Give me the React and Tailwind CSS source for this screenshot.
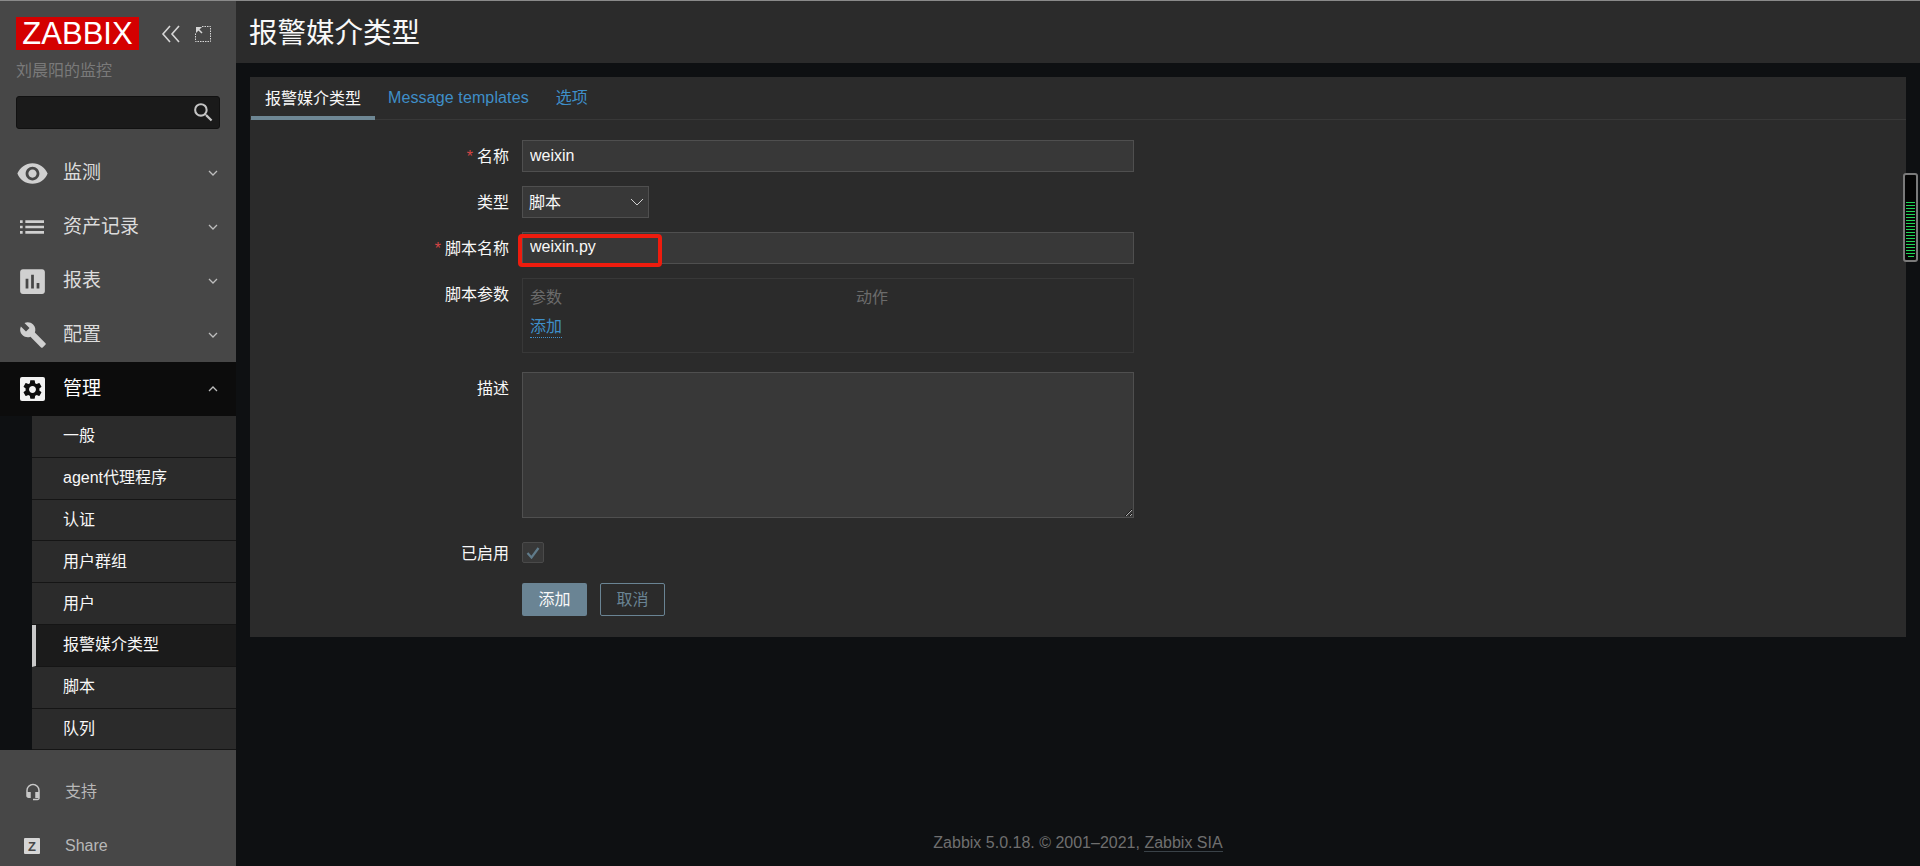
import React from 'react'
import {
  MdRemoveRedEye,
  MdList,
  MdAssessment,
  MdBuild,
  MdSettings,
  MdSearch,
  MdHeadsetMic,
} from 'react-icons/md'

const Chevron = ({ up, className }) => (
  <svg width="10" height="6" viewBox="0 0 10 6" fill="none" stroke="currentColor" strokeWidth="1.3" className={className}>
    <path d={up ? 'M1 5l4-4 4 4' : 'M1 1l4 4 4-4'} />
  </svg>
)

const NavItem = ({ icon, label, open }) => (
  <div className={`flex h-[54px] items-center pl-[16px] pr-[18px] ${open ? 'bg-[#0c0c0c] text-white' : 'text-[#dcdcdc]'}`}>
    <div className="flex w-[47px] shrink-0">{icon}</div>
    <span className="flex-1 text-[19px]">{label}</span>
    <Chevron up={open} className="text-[#bdbdbd]" />
  </div>
)

const subItems = ['一般', 'agent代理程序', '认证', '用户群组', '用户', '报警媒介类型', '脚本', '队列']

const Sidebar = () => (
  <aside className="flex h-full w-[236px] shrink-0 flex-col overflow-hidden bg-[#474747]">
    <div className="h-[145px] shrink-0 px-[16px] pt-[16px]">
      <div className="flex items-center">
        <div className="flex h-[33px] w-[123px] items-center justify-center bg-[#d40000] text-[31px] font-light leading-none text-white">
          ZABBIX
        </div>
        <svg width="20" height="18" viewBox="0 0 20 18" fill="none" stroke="#d6d6d6" strokeWidth="1.6" className="ml-[22px]">
          <path d="M9 1L2 9l7 8M18 1l-7 8 7 8" />
        </svg>
        <svg width="16" height="16" viewBox="0 0 16 16" fill="none" stroke="#d6d6d6" className="ml-[14px]">
          <path d="M7 .5h8.500v15H.5V7" strokeDasharray="1.500 1" />
          <path d="M1 1h6L1 7z" fill="#d6d6d6" stroke="none" />
          <path d="M2 2l5 5" strokeWidth="1.500" />
        </svg>
      </div>
      <div className="mt-[9px] text-[16px] leading-[24px] text-[#7a7a7a]">刘晨阳的监控</div>
      <div className="mt-[13px] flex h-[33px] w-[204px] items-center justify-end rounded-[3px] border border-[#111] bg-[#1a1a1a] pr-[3px]">
        <MdSearch size={25} className="text-[#c4c4c4]" />
      </div>
    </div>

    <nav className="min-h-0 flex-1 overflow-hidden">
      <NavItem icon={<MdRemoveRedEye size={33} className="text-[#d0d0d0]" />} label="监测" />
      <NavItem icon={<MdList size={32} className="text-[#d0d0d0]" />} label="资产记录" />
      <NavItem icon={<MdAssessment size={33} className="text-[#d0d0d0]" />} label="报表" />
      <NavItem icon={<MdBuild size={28} className="ml-[3px] text-[#d0d0d0]" />} label="配置" />
      <NavItem
        open
        icon={
          <div className="ml-[4px] flex h-[24px] w-[25px] items-center justify-center rounded-[2px] bg-[#f2f2f2]">
            <MdSettings size={23} className="text-[#0c0c0c]" />
          </div>
        }
        label="管理"
      />
      <div className="bg-[#0e1012] pl-[32px]">
        {subItems.map((item) => (
          <div
            key={item}
            className={`flex h-[41.8px] items-center border-b border-[#151515] text-[16px] text-[#f8f8f8] ${
              item === '报警媒介类型'
                ? 'border-l-[4px] border-l-[#c8c8c8] bg-[#1b1b1b] pl-[27px]'
                : 'bg-[#2b2b2b] pl-[31px]'
            }`}
          >
            {item}
          </div>
        ))}
      </div>
    </nav>

    <div className="h-[116px] shrink-0 overflow-hidden pt-[15px] text-[16px] text-[#b8b8b8]">
      <div className="flex h-[54px] items-center pl-[24px]">
        <MdHeadsetMic size={18} className="text-[#c8c8c8]" />
        <span className="ml-[23px]">支持</span>
      </div>
      <div className="flex h-[54px] items-center pl-[24px]">
        <div className="flex h-[16px] w-[16px] items-center justify-center rounded-[1px] bg-[#d6d6d6] text-[13px] font-bold leading-none text-[#474747]">
          Z
        </div>
        <span className="ml-[25px]">Share</span>
      </div>
    </div>
  </aside>
)

const FormRow = ({ label, required, className, labelClass, children }) => (
  <div className={`flex ${className}`}>
    <label className={`w-[272px] shrink-0 pr-[13px] text-right text-[16px] text-[#f8f8f8] ${labelClass || 'h-[32px] leading-[34px]'}`}>
      {required && <span className="mr-[4px] text-[#d64545]">*</span>}
      {label}
    </label>
    {children}
  </div>
)

const inputClass =
  'h-[32px] w-[612px] border border-[#4f4f4f] bg-[#383838] px-[7px] text-[16px] text-[#f8f8f8] outline-none'

const MediaForm = () => (
  <section className="mt-[14px] h-[560px] w-[1656px] shrink-0 bg-[#2b2b2b]">
    <div className="flex h-[43px] items-end border-b border-[#383838] pl-[1px] text-[16px]">
      <div className="flex h-[42px] w-[124px] -mb-[1px] items-center justify-center border-b-[4px] border-[#6e8794] pt-[4px] text-[#f8f8f8]">
        报警媒介类型
      </div>
      <div className="ml-[13px] flex h-[42px] items-center tracking-[0.12px] text-[#3f8fc9]">Message templates</div>
      <div className="ml-[27px] flex h-[42px] items-center text-[#3f8fc9]">选项</div>
    </div>

    <div className="pt-[20px]">
      <FormRow label="名称" required className="mb-[14px]">
        <input className={inputClass} defaultValue="weixin" />
      </FormRow>
      <FormRow label="类型" className="mb-[14px]">
        <div className="relative h-[32px] w-[127px]">
          <select className="h-full w-full appearance-none border border-[#4f4f4f] bg-[#383838] px-[6px] pt-[2px] text-[16px] text-[#f8f8f8] outline-none">
            <option>脚本</option>
          </select>
          <svg width="14" height="8" viewBox="0 0 14 8" fill="none" stroke="#d0d0d0" className="pointer-events-none absolute right-[5px] top-[12px]">
            <path d="M1 1l6 6 6-6" />
          </svg>
        </div>
      </FormRow>
      <FormRow label="脚本名称" required className="mb-[14px]">
        <div className="relative">
          <input className={`${inputClass} pb-[3px]`} defaultValue="weixin.py" />
          {/* red annotation drawn over the field */}
          <div className="pointer-events-none absolute -left-[4px] top-[2px] h-[33px] w-[144px] rounded-[4px] border-[4px] border-[#ee1c0e]" />
        </div>
      </FormRow>
      <FormRow label="脚本参数" className="mb-[19px]">
        <div className="h-[75px] w-[612px] border border-[#383838] px-[7px] pt-[7px] text-[16px]">
          <div className="flex h-[24px] items-center text-[#6b6b6b]">
            <span className="w-[326px]">参数</span>
            <span>动作</span>
          </div>
          <a className="mt-[6px] inline-block border-b border-dotted border-[#3f8fc9] leading-[21px] text-[#3f8fc9]">添加</a>
        </div>
      </FormRow>
      <FormRow label="描述" className="mb-[24px]">
        <textarea className="block h-[146px] w-[612px] border border-[#4f4f4f] bg-[#383838] [color-scheme:dark] outline-none" />
      </FormRow>
      <FormRow label="已启用" className="mb-[20px]" labelClass="h-[21px] leading-[23px]">
        <div className="flex h-[21px] w-[22px] items-center justify-center rounded-[2px] border border-[#4a4a4a] bg-[#383838]">
          <svg width="14" height="12" viewBox="0 0 14 12" fill="none" stroke="#607b8a" strokeWidth="2.200">
            <path d="M1.500 6l4 4.500L12.500 1" />
          </svg>
        </div>
      </FormRow>
      <div className="flex gap-[13px] pl-[272px]">
        <button className="h-[33px] w-[65px] rounded-[2px] bg-[#6a8494] text-[16px] text-[#f8f8f8]">添加</button>
        <button className="h-[33px] w-[65px] rounded-[2px] border border-[#6a8494] text-[16px] text-[#6a8494]">取消</button>
      </div>
    </div>
  </section>
)

const bars = Array.from({ length: 19 })

// floating traffic meter sitting on the right edge of the window
const Meter = () => (
  <div className="absolute right-[2px] top-[172px] flex h-[89px] w-[15px] flex-col items-center justify-end gap-[2px] rounded-[3px] border-2 border-[#7a7a7a] bg-[#050505] pb-[3px]">
    {bars.map((_, i) => (
      <div key={i} className={`h-[1px] bg-[#1fd655] ${i === bars.length - 1 ? 'w-[6px]' : 'w-[9px]'}`} />
    ))}
  </div>
)

const App = () => {
  return (
    <div className="relative flex h-[866px] w-[1920px] overflow-hidden border-t border-[#8a8a8a] bg-[#0e1012] font-['Liberation_Sans','Noto_Sans_CJK_SC',sans-serif]">
      <Sidebar />
      <main className="flex min-w-0 flex-1 flex-col">
        <header className="flex h-[62px] shrink-0 items-center bg-[#2b2b2b] pl-[13px] pt-[3px] text-[28.5px] text-[#f8f8f8]">
          报警媒介类型
        </header>
        <div className="pl-[14px]">
          <MediaForm />
        </div>
        <footer className="mt-auto pb-[11px] text-center text-[16px] leading-[24px] text-[#6f6f6f]">
          Zabbix 5.0.18. © 2001–2021, <a className="border-b border-[#3a4248]">Zabbix SIA</a>
        </footer>
      </main>
      <Meter />
    </div>
  )
}

export default App
